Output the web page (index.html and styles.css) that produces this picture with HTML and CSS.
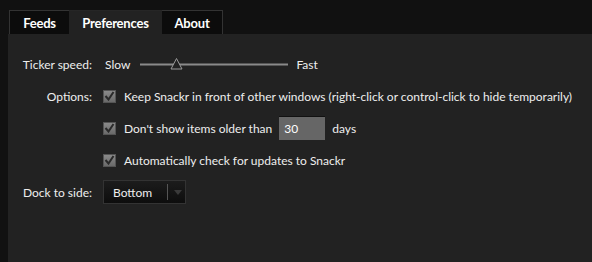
FILE: index.html
```html
<!DOCTYPE html>
<html lang="en">
<head>
    <meta charset="UTF-8">
    <title>Snackr Preferences</title>
    <link rel="stylesheet" href="styles.css">
</head>
<body>
    <div class="tabs">
        <div class="tab first">Feeds</div>
        <div class="tab active">Preferences</div>
        <div class="tab last">About</div>
    </div>

    <div class="panel">
        <div class="label">Ticker speed:</div>
        <div class="field">
            <span class="slow">Slow</span>
            <svg class="slider" width="149" height="14" viewBox="0 0 149 14">
                <line x1="0" y1="7.5" x2="148" y2="7.5" stroke="#8a8a8a" stroke-width="2"/>
                <polygon points="36.5,1.5 42,12 31,12" fill="#222" stroke="#9a9a9a" stroke-width="1"/>
            </svg>
            <span>Fast</span>
        </div>

        <div class="label">Options:</div>
        <div class="field">
            <span class="check"><svg width="11" height="10" viewBox="0 0 11 10"><path d="M1.5 5 L4.5 8.5 L9.5 1" fill="none" stroke="#2a2a2a" stroke-width="2"/></svg></span>
            <span>Keep Snackr in front of other windows (right-click or control-click to hide temporarily)</span>
        </div>

        <div class="label"></div>
        <div class="field">
            <span class="check"><svg width="11" height="10" viewBox="0 0 11 10"><path d="M1.5 5 L4.5 8.5 L9.5 1" fill="none" stroke="#2a2a2a" stroke-width="2"/></svg></span>
            <span>Don't show items older than</span>
            <input class="days" type="text" value="30">
            <span>days</span>
        </div>

        <div class="label"></div>
        <div class="field">
            <span class="check"><svg width="11" height="10" viewBox="0 0 11 10"><path d="M1.5 5 L4.5 8.5 L9.5 1" fill="none" stroke="#2a2a2a" stroke-width="2"/></svg></span>
            <span>Automatically check for updates to Snackr</span>
        </div>

        <div class="label">Dock to side:</div>
        <div class="field">
            <div class="select">
                <span class="select-text">Bottom</span>
                <span class="select-sep"></span>
                <span class="select-arrow"></span>
            </div>
        </div>
    </div>
</body>
</html>
```

FILE: styles.css
```css
body {
    margin: 0;
    background: #111;
    color: #eee;
    font-family: Lato, "Open Sans", sans-serif;
    font-size: 12px;
    height: 262px;
    overflow: hidden;
}
.tabs {
    display: flex;
    padding: 10px 0 0 9px;
}
.tab {
    height: 24px;
    line-height: 24px;
    text-align: center;
    font-size: 13px;
    letter-spacing: -0.2px;
    font-weight: bold;
    color: #fff;
    background: #0c0c0c;
    border-top: 1px solid #333;
    box-sizing: border-box;
}
.tab.first {
    width: 60px;
    border-left: 1px solid #333;
}
.tab.active {
    width: 93px;
    background: #222;
    border-top-color: #262626;
}
.tab.last {
    width: 61px;
    border-right: 1px solid #333;
}
.panel {
    margin-left: 8px;
    background: #222;
    height: 228px;
    padding-top: 14px;
    box-sizing: border-box;
    display: grid;
    grid-template-columns: 84px 1fr;
    grid-auto-rows: 32px;
    column-gap: 11px;
    align-items: center;
}
.label {
    text-align: right;
}
.field {
    display: flex;
    align-items: center;
    gap: 7px;
    white-space: nowrap;
}
.slow {
    margin-left: 2px;
}
.slider {
    margin-left: 3px;
}
.check {
    width: 13px;
    height: 13px;
    margin-right: 1px;
    box-sizing: border-box;
    border: 1px solid #555;
    background: linear-gradient(#8a8a8a, #6a6a6a);
    display: flex;
    align-items: center;
    justify-content: center;
}
.days {
    width: 46px;
    height: 24px;
    box-sizing: border-box;
    border: none;
    border-top: 1px solid #111;
    background: #666;
    color: #fff;
    font-family: inherit;
    font-size: 12px;
    padding: 0 0 0 5px;
}
.select {
    width: 83px;
    height: 24px;
    box-sizing: border-box;
    border: 1px solid #333;
    background: linear-gradient(#1c1c1c, #0d0d0d);
    display: flex;
    align-items: center;
}
.select-text {
    padding-left: 9px;
    width: 54px;
}
.select-sep {
    width: 1px;
    height: 16px;
    background: #555;
}
.select-arrow {
    margin-left: 6px;
    width: 0;
    height: 0;
    border-left: 4px solid transparent;
    border-right: 4px solid transparent;
    border-top: 5px solid #3a3a3a;
}
```
